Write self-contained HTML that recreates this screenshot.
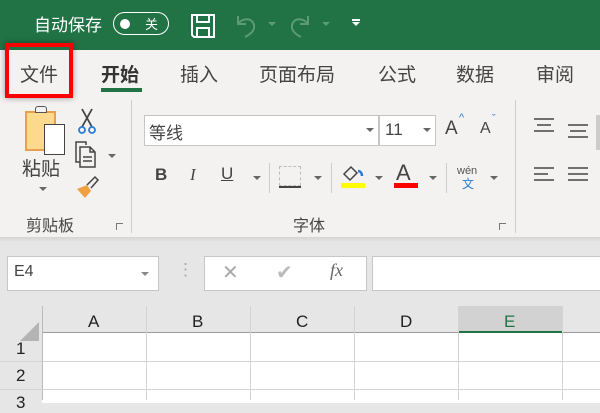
<!DOCTYPE html>
<html><head><meta charset="utf-8"><style>
*{margin:0;padding:0;box-sizing:border-box}
body{width:600px;height:400px;overflow:hidden;position:relative;background:#e6e6e6;font-family:"Liberation Sans","Noto Sans CJK SC",sans-serif;color:#444}
.a{position:absolute}
.t{position:absolute;font-size:17px;color:#444;white-space:nowrap}
.tab{position:absolute;font-size:19px;color:#444;white-space:nowrap;top:60px}
.arr{position:absolute;width:0;height:0;border-left:4px solid transparent;border-right:4px solid transparent;border-top:4px solid #666}
</style></head><body>
<div class="a" style="left:0;top:0;width:600px;height:50px;background:#217346"></div>
<div class="t" style="left:34px;top:11px;color:#fff;font-size:17px">自动保存</div>
<div class="a" style="left:113px;top:12px;width:56px;height:23px;border:1.5px solid #fff;border-radius:12px"></div>
<div class="a" style="left:120px;top:19px;width:10px;height:10px;border-radius:50%;background:#fff"></div>
<div class="t" style="left:145px;top:14px;color:#fff;font-size:13px">关</div>
<svg class="a" style="left:190px;top:13px" width="26" height="26" viewBox="0 0 26 26" fill="none" stroke="#fff" stroke-width="2"><path d="M2 2h22v22H4l-2-2z M7 2v7h12V2 M7 24v-9h12v9"/></svg>
<svg class="a" style="left:234px;top:13px" width="100" height="26" viewBox="0 0 100 26" fill="none" stroke="#5c9a78" stroke-width="2"><path d="M4 3v8h8 M4 11c4-6 14-7 16 1 1 5-3 9-9 12"/><path d="M74 3v8h-8 M74 11c-4-6-14-7-16 1-1 5 3 9 9 12"/></svg>
<div class="arr" style="left:268px;top:22px;border-top-color:#5c9a78"></div>
<div class="arr" style="left:322px;top:22px;border-top-color:#5c9a78"></div>
<div class="a" style="left:352px;top:19px;width:8px;height:1.5px;background:#fff"></div>
<div class="arr" style="left:352px;top:22px;border-top-color:#fff"></div>

<div class="a" style="left:0;top:50px;width:600px;height:188px;background:#f3f2f1"></div>
<div class="tab" style="left:20px">文件</div>
<div class="a" style="left:5px;top:43px;width:68px;height:55px;border:4px solid #f00;box-shadow:0 0 6px rgba(0,0,0,.4)"></div>
<div class="tab" style="left:101px;font-weight:bold;color:#333">开始</div>
<div class="a" style="left:101px;top:88px;width:41px;height:4px;background:#217346"></div>
<div class="tab" style="left:180px">插入</div>
<div class="tab" style="left:259px">页面布局</div>
<div class="tab" style="left:378px">公式</div>
<div class="tab" style="left:456px">数据</div>
<div class="tab" style="left:536px">审阅</div>

<!-- clipboard -->
<div class="a" style="left:25px;top:111px;width:31px;height:40px;background:#fcd98c;border:2px solid #e8a04c"></div>
<div class="a" style="left:35px;top:106px;width:12px;height:7px;border:1.5px solid #555;background:#f3f2f1;border-radius:3px 3px 0 0"></div>
<div class="a" style="left:44px;top:124px;width:21px;height:31px;background:#fff;border:1.5px solid #444"></div>
<div class="t" style="left:22px;top:154px;font-size:19px">粘贴</div>
<div class="arr" style="left:39px;top:187px"></div>
<svg class="a" style="left:78px;top:107px" width="18" height="28" viewBox="0 0 18 28" fill="none" stroke-width="1.8"><path d="M4 2l10 18 M14 2L4 20" stroke="#444"/><circle cx="4" cy="23" r="3" stroke="#2b7cd3"/><circle cx="14" cy="23" r="3" stroke="#2b7cd3"/></svg>
<svg class="a" style="left:74px;top:140px" width="28" height="30" viewBox="0 0 28 30" fill="none" stroke="#444" stroke-width="1.5"><path d="M6 22H2V2h10v3 M6 7h10l5 5v15H6z M16 7v5h5 M9 17h9 M9 21h9"/></svg>
<div class="arr" style="left:108px;top:154px"></div>
<svg class="a" style="left:75px;top:175px" width="26" height="24" viewBox="0 0 26 24"><path d="M2 14l10-4 4 6-6 7z" fill="#f0a040"/><path d="M12 10l8-8 3 3-7 8" fill="none" stroke="#444" stroke-width="1.5"/></svg>
<div class="t" style="left:26px;top:212px;font-size:16px">剪贴板</div>
<div class="a" style="left:116px;top:223px;width:7px;height:7px;border-left:1px solid #777;border-top:1px solid #777"></div>
<div class="a" style="left:131px;top:100px;width:1px;height:133px;background:#ccc"></div>

<!-- font -->
<div class="a" style="left:144px;top:115px;width:235px;height:31px;background:#fff;border:1px solid #c8c6c4"></div>
<div class="t" style="left:149px;top:119px;font-size:17px">等线</div>
<div class="arr" style="left:366px;top:128px"></div>
<div class="a" style="left:379px;top:115px;width:57px;height:31px;background:#fff;border:1px solid #c8c6c4"></div>
<div class="t" style="left:385px;top:120px;font-size:17px">11</div>
<div class="arr" style="left:423px;top:128px"></div>
<div class="t" style="left:445px;top:118px;font-size:19px">A</div><div class="t" style="left:459px;top:112px;font-size:11px;color:#2b7cd3">^</div>
<div class="t" style="left:480px;top:120px;font-size:16px">A</div><div class="t" style="left:492px;top:113px;font-size:11px;color:#2b7cd3">ˇ</div>
<div class="t" style="left:155px;top:165px;font-weight:bold">B</div>
<div class="t" style="left:190px;top:165px;font-style:italic;font-family:'Liberation Serif',serif">I</div>
<div class="t" style="left:221px;top:164px;text-decoration:underline">U</div>
<div class="arr" style="left:253px;top:176px"></div>
<div class="a" style="left:269px;top:163px;width:1px;height:30px;background:#ccc"></div>
<div class="a" style="left:279px;top:166px;width:22px;height:20px;border:1px dashed #bbb"></div>
<div class="a" style="left:279px;top:186px;width:22px;height:2px;background:#444"></div>
<div class="arr" style="left:314px;top:176px"></div>
<div class="a" style="left:331px;top:163px;width:1px;height:30px;background:#ccc"></div>
<svg class="a" style="left:341px;top:165px" width="26" height="20" viewBox="0 0 26 20" fill="none" stroke="#444" stroke-width="1.5"><path d="M10 2l-7 7 6 6 7-7z"/><path d="M17 6c3 0 4 3 4 5" stroke="#2b7cd3" stroke-width="2.5"/></svg>
<div class="a" style="left:341px;top:183px;width:24px;height:5px;background:#ff0"></div>
<div class="arr" style="left:375px;top:176px"></div>
<div class="t" style="left:396px;top:160px;font-size:22px">A</div>
<div class="a" style="left:394px;top:183px;width:24px;height:5px;background:#f00"></div>
<div class="arr" style="left:429px;top:176px"></div>
<div class="a" style="left:446px;top:163px;width:1px;height:30px;background:#ccc"></div>
<div class="t" style="left:457px;top:165px;font-size:11px;color:#555">wén</div>
<div class="t" style="left:462px;top:175px;font-size:12px;color:#2b7cd3">文</div>
<div class="arr" style="left:490px;top:176px"></div>
<div class="t" style="left:293px;top:212px;font-size:16px">字体</div>
<div class="a" style="left:499px;top:223px;width:7px;height:7px;border-left:1px solid #777;border-top:1px solid #777"></div>
<div class="a" style="left:515px;top:100px;width:1px;height:133px;background:#ccc"></div>
<svg class="a" style="left:532px;top:115px" width="68" height="75" viewBox="0 0 68 75" stroke="#444" stroke-width="1.5"><path d="M2 4h20M5 10h14M2 16h20 M36 10h20M38 16h16M36 22h20 M2 53h20M2 59h14M2 65h20 M36 53h20M36 59h20M36 65h20"/></svg>
<div class="a" style="left:596px;top:115px;width:4px;height:35px;background:#ccc"></div>
<div class="a" style="left:0;top:237px;width:600px;height:5px;background:linear-gradient(#d4d4d4,#e6e6e6)"></div>

<!-- formula bar -->
<div class="a" style="left:7px;top:256px;width:152px;height:35px;background:#fff;border:1px solid #c8c6c4"></div>
<div class="t" style="left:14px;top:263px;font-size:16px">E4</div>
<div class="arr" style="left:141px;top:272px;border-top-color:#888"></div>
<div class="t" style="left:177px;top:260px;color:#aaa">⋮</div>
<div class="a" style="left:204px;top:256px;width:163px;height:35px;background:#fff;border:1px solid #c8c6c4"></div>
<div class="t" style="left:222px;top:260px;font-size:20px;color:#aaa">✕</div>
<div class="t" style="left:276px;top:260px;font-size:20px;color:#bbb">✔</div>
<div class="t" style="left:330px;top:260px;font-size:18px;color:#666;font-family:'Liberation Serif',serif;font-style:italic">fx</div>
<div class="a" style="left:372px;top:256px;width:240px;height:35px;background:#fff;border:1px solid #c8c6c4"></div>

<!-- grid -->
<div class="a" style="left:20px;top:322px;width:0;height:0;border-left:19px solid transparent;border-bottom:19px solid #b4b4b4"></div>
<div class="a" style="left:42px;top:333px;width:558px;height:70px;background:#fff"></div>
<div class="a" style="left:459px;top:306px;width:104px;height:27px;background:#d2d2d2;border-bottom:2px solid #217346"></div>
<div class="a" style="left:42px;top:332px;width:417px;height:1px;background:#9b9b9b"></div>
<div class="a" style="left:563px;top:332px;width:37px;height:1px;background:#9b9b9b"></div>
<div class="a" style="left:42px;top:306px;width:1px;height:94px;background:#bbb"></div>
<div class="a" style="left:146px;top:306px;width:1px;height:94px;background:#d4d4d4"></div>
<div class="a" style="left:250px;top:306px;width:1px;height:94px;background:#d4d4d4"></div>
<div class="a" style="left:354px;top:306px;width:1px;height:94px;background:#d4d4d4"></div>
<div class="a" style="left:458px;top:306px;width:1px;height:94px;background:#d4d4d4"></div>
<div class="a" style="left:562px;top:306px;width:1px;height:94px;background:#d4d4d4"></div>
<div class="a" style="left:0;top:361px;width:600px;height:1px;background:#d4d4d4"></div>
<div class="a" style="left:0;top:389px;width:600px;height:1px;background:#d4d4d4"></div>
<div class="t" style="left:88px;top:312px;color:#222">A</div>
<div class="t" style="left:192px;top:312px;color:#222">B</div>
<div class="t" style="left:296px;top:312px;color:#222">C</div>
<div class="t" style="left:400px;top:312px;color:#222">D</div>
<div class="t" style="left:504px;top:312px;color:#217346">E</div>
<div class="t" style="left:16px;top:339px;color:#222">1</div>
<div class="t" style="left:16px;top:366px;color:#222">2</div>
<div class="t" style="left:16px;top:393px;color:#222">3</div>
</body></html>
